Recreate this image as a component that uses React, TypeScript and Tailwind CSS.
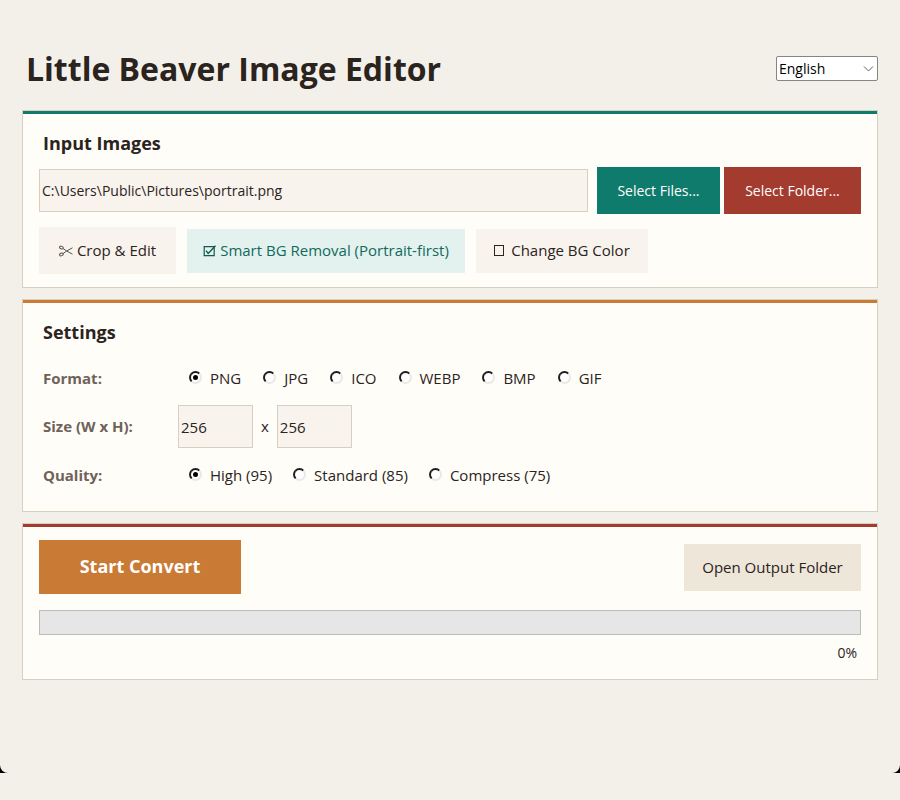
import React, { useState } from 'react';

const FORMATS = ['PNG', 'JPG', 'ICO', 'WEBP', 'BMP', 'GIF'];

const QUALITIES = [
  { value: '95', label: 'High (95)' },
  { value: '85', label: 'Standard (85)' },
  { value: '75', label: 'Compress (75)' },
];

const fieldClass =
  'border border-[#d8cfc0] bg-[#f8f3ec] pl-0.5 text-[#2b231d] outline-none h-[43px]';

interface RadioProps {
  name: string;
  label: string;
  checked: boolean;
  onSelect: () => void;
}

const Radio: React.FC<RadioProps> = ({ name, label, checked, onSelect }) => (
  <label className="flex items-center gap-2 whitespace-nowrap">
    <input
      type="radio"
      name={name}
      checked={checked}
      onChange={onSelect}
      className="mb-0.5 grid size-[13px] shrink-0 appearance-none place-items-center rounded-full border-2 border-t-[#1c1c1c] border-l-[#1c1c1c] border-r-[#e9e8e5] border-b-[#e9e8e5] bg-white checked:before:size-[5px] checked:before:rounded-full checked:before:bg-black"
    />
    {label}
  </label>
);

interface PanelProps {
  stripClass: string;
  title?: string;
  children: React.ReactNode;
}

const Panel: React.FC<PanelProps> = ({ stripClass, title, children }) => (
  <section className="border border-[#d8cfc0] bg-[#fffdf8]">
    <div className={`h-[3px] ${stripClass}`} />
    <div className="px-4 pt-px">
      {title && <h2 className="px-1 pt-4 text-lg leading-6 font-bold">{title}</h2>}
      {children}
    </div>
  </section>
);

const ScissorsIcon = () => (
  <svg width="14" height="12" viewBox="0 0 14 12" fill="none" stroke="#5b544e" strokeWidth="1">
    <ellipse cx="2.4" cy="2.6" rx="1.9" ry="1.3" transform="rotate(25 2.4 2.6)" />
    <ellipse cx="2.4" cy="9.4" rx="1.9" ry="1.3" transform="rotate(-25 2.4 9.4)" />
    <path d="M4.1 3.5 7.5 5.9 13.5 9.2M4.1 8.5 7.5 6.1 13.5 2.8" />
  </svg>
);

const CheckedBoxIcon = () => (
  <svg width="13" height="12" viewBox="0 0 13 12" fill="none" stroke="#12594f" strokeWidth="1.2">
    <path d="M1.2 1.6H11.2V10.6H1.2Z" />
    <path d="M3 5.6 5.2 8.4 12.5 0.8" strokeWidth="1.4" />
  </svg>
);

const EmptyBoxIcon = () => (
  <svg width="11" height="12" viewBox="0 0 11 12" fill="none" stroke="#2b231d" strokeWidth="1">
    <rect x="0.5" y="0.5" width="9" height="10" />
  </svg>
);

const App: React.FC = () => {
  const [language, setLanguage] = useState('English');
  const [path, setPath] = useState('C:\\Users\\Public\\Pictures\\portrait.png');
  const [format, setFormat] = useState('PNG');
  const [width, setWidth] = useState('256');
  const [height, setHeight] = useState('256');
  const [quality, setQuality] = useState('95');
  const [progress] = useState(0);

  return (
    <div className="min-h-screen bg-[#f3f0ea] font-['Open_Sans',sans-serif] text-[15px] text-[#2b231d]">
      <div className="bg-black">
        <main className="flex flex-col gap-[11px] rounded-b-lg bg-[#f3f0ea] px-[22px] pt-11 pb-[93px]">
          <header className="flex h-[55px] items-start justify-between pl-1">
            <h1 className="text-[32px] leading-[50px] font-bold whitespace-nowrap">
              Little Beaver Image Editor
            </h1>
            <div className="relative mt-3">
              <select
                aria-label="Language"
                value={language}
                onChange={(e) => setLanguage(e.target.value)}
                className="h-[25px] w-[102px] appearance-none rounded-xs border border-[#858585] bg-white pl-0.5 text-sm leading-5 text-black"
              >
                <option>English</option>
                <option>中文</option>
              </select>
              <svg
                className="pointer-events-none absolute top-2 right-1"
                width="11"
                height="9"
                viewBox="0 0 11 9"
                fill="none"
                stroke="#606060"
              >
                <path d="M1 2.5 5.5 7 10 2.5" />
              </svg>
            </div>
          </header>

          <Panel stripClass="bg-[#0f7b6c]" title="Input Images">
            <div className="flex items-center gap-1 pt-3 text-sm">
              <input
                type="text"
                aria-label="Input path"
                value={path}
                onChange={(e) => setPath(e.target.value)}
                className={`${fieldClass} mr-[5px] min-w-0 flex-1`}
              />
              <button className="h-[47px] w-[123px] bg-[#0f7b6c] text-white">Select Files...</button>
              <button className="h-[47px] w-[137px] bg-[#a33b2e] text-white">Select Folder...</button>
            </div>
            <div className="flex items-center gap-[11px] pt-[13px] pb-[13px]">
              <button className="flex h-[47px] w-[137px] items-center justify-center gap-1 bg-[#f8f3ec]">
                <ScissorsIcon />
                Crop &amp; Edit
              </button>
              <button className="flex h-11 w-[278px] items-center justify-center gap-1 bg-[#e3f2ef] text-[#12695d]">
                <CheckedBoxIcon />
                Smart BG Removal (Portrait-first)
              </button>
              <button className="flex h-11 w-[172px] items-center justify-center gap-1.5 bg-[#f8f3ec]">
                <EmptyBoxIcon />
                Change BG Color
              </button>
            </div>
          </Panel>

          <Panel stripClass="bg-[#c97a34]" title="Settings">
            <div className="grid grid-cols-[139px_1fr] items-center gap-y-[15px] pt-[22px] pb-6">
              <span className="pl-1 font-bold text-[#6f6259]">Format:</span>
              <div role="radiogroup" aria-label="Format" className="flex h-6 items-center gap-[22px] pl-[11px]">
                {FORMATS.map((f) => (
                  <Radio key={f} name="format" label={f} checked={format === f} onSelect={() => setFormat(f)} />
                ))}
              </div>

              <label htmlFor="width" className="pl-1 font-bold text-[#6f6259]">
                Size (W x H):
              </label>
              <div className="flex items-center gap-2">
                <input
                  id="width"
                  type="text"
                  value={width}
                  onChange={(e) => setWidth(e.target.value)}
                  className={`${fieldClass} w-[75px]`}
                />
                <span>x</span>
                <input
                  type="text"
                  aria-label="Height"
                  value={height}
                  onChange={(e) => setHeight(e.target.value)}
                  className={`${fieldClass} w-[75px]`}
                />
              </div>

              <span className="pl-1 font-bold text-[#6f6259]">Quality:</span>
              <div role="radiogroup" aria-label="Quality" className="flex h-6 items-center gap-[21px] pl-[11px]">
                {QUALITIES.map((q) => (
                  <Radio
                    key={q.value}
                    name="quality"
                    label={q.label}
                    checked={quality === q.value}
                    onSelect={() => setQuality(q.value)}
                  />
                ))}
              </div>
            </div>
          </Panel>

          <Panel stripClass="bg-[#a33b2e]">
            <div className="flex items-center justify-between pt-3">
              <button className="h-[54px] w-[202px] bg-[#c97a34] pb-0.5 text-lg font-bold text-white">
                Start Convert
              </button>
              <button className="h-[47px] w-[177px] bg-[#efe6da]">Open Output Folder</button>
            </div>
            <div
              role="progressbar"
              aria-label="Conversion progress"
              aria-valuenow={progress}
              aria-valuemin={0}
              aria-valuemax={100}
              className="mt-4 h-[25px] border border-[#bcbcbc] bg-[#e6e6e6]"
            >
              <div className="h-full bg-[#06b025]" style={{ width: `${progress}%` }} />
            </div>
            <div className="pt-2 pr-1 pb-4 text-right text-sm">{progress}%</div>
          </Panel>
        </main>
      </div>
    </div>
  );
};

export default App;
